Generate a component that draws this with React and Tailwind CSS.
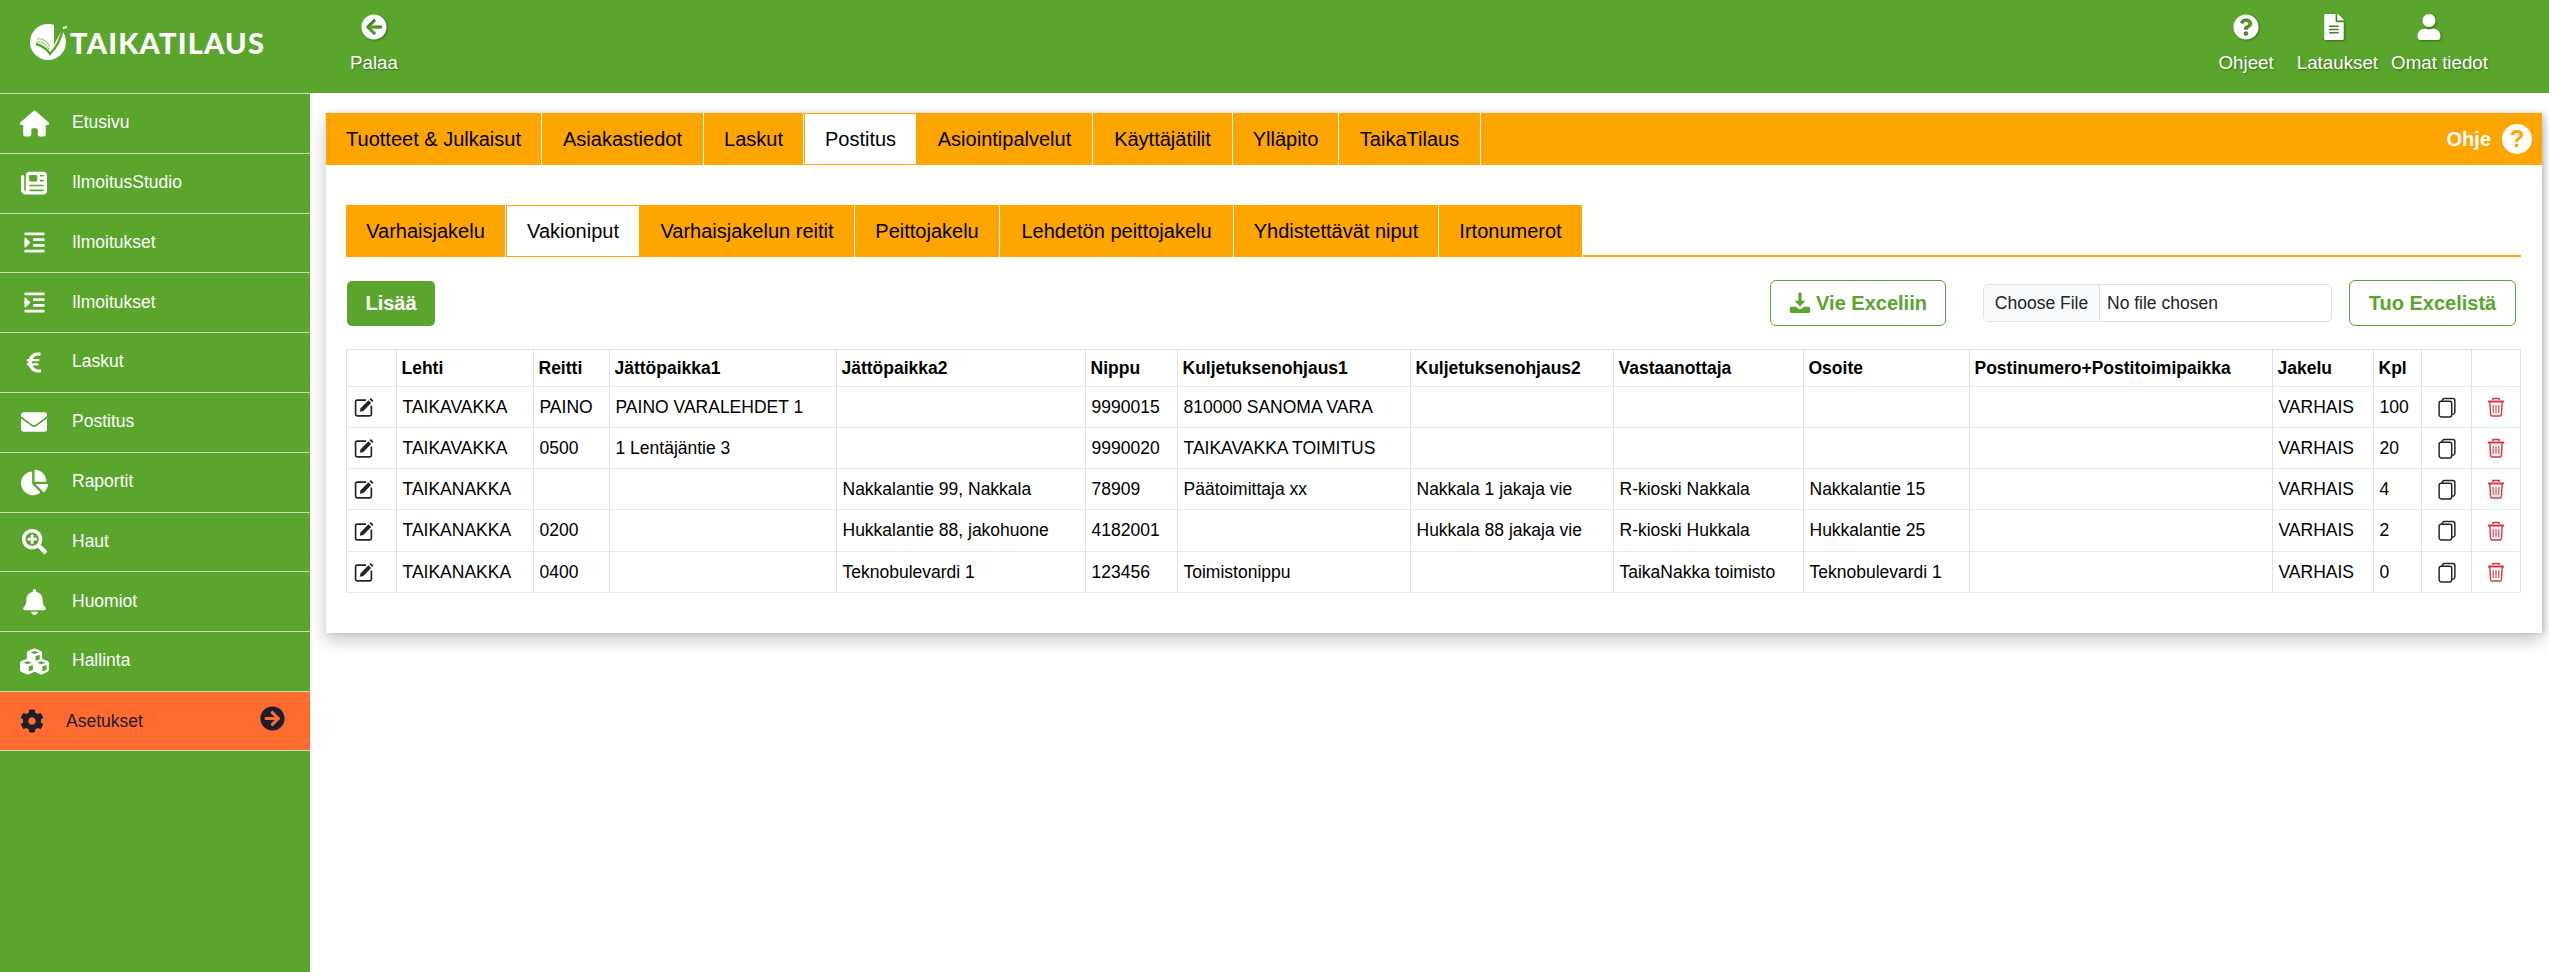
import {
  FaArrowCircleLeft,
  FaArrowCircleRight,
  FaBell,
  FaChartPie,
  FaCog,
  FaEnvelope,
  FaEuroSign,
  FaFileAlt,
  FaIndent,
  FaQuestionCircle,
  FaSearchPlus,
  FaUser,
} from "react-icons/fa";
import { FaCubes, FaHouse, FaNewspaper } from "react-icons/fa6";

const menu = [
  { label: "Etusivu", Icon: FaHouse, size: "w-[29px] h-[29px]" },
  { label: "IlmoitusStudio", Icon: FaNewspaper, size: "w-[26px] h-[26px]" },
  { label: "Ilmoitukset", Icon: FaIndent, size: "w-[23px] h-[23px]" },
  { label: "Ilmoitukset", Icon: FaIndent, size: "w-[23px] h-[23px]" },
  { label: "Laskut", Icon: FaEuroSign, size: "w-[18px] h-[23px]" },
  { label: "Postitus", Icon: FaEnvelope, size: "w-[26px] h-[26px]" },
  { label: "Raportit", Icon: FaChartPie, size: "w-[27px] h-[27px]" },
  { label: "Haut", Icon: FaSearchPlus, size: "w-[25px] h-[25px]" },
  { label: "Huomiot", Icon: FaBell, size: "w-[23px] h-[26px]" },
  { label: "Hallinta", Icon: FaCubes, size: "w-[29px] h-[29px]" },
];

const topTabs = [
  { label: "Tuotteet & Julkaisut", width: "w-[216px]" },
  { label: "Asiakastiedot", width: "w-[162px]" },
  { label: "Laskut", width: "w-[100px]" },
  { label: "Postitus", width: "w-[113px]", active: true },
  { label: "Asiointipalvelut", width: "w-[176px]" },
  { label: "Käyttäjätilit", width: "w-[140px]" },
  { label: "Ylläpito", width: "w-[106px]" },
  { label: "TaikaTilaus", width: "w-[142px]" },
];

const subTabs = [
  { label: "Varhaisjakelu", width: "w-[160px]" },
  { label: "Vakioniput", width: "w-[134px]", active: true },
  { label: "Varhaisjakelun reitit", width: "w-[215px]" },
  { label: "Peittojakelu", width: "w-[145px]" },
  { label: "Lehdetön peittojakelu", width: "w-[234px]" },
  { label: "Yhdistettävät niput", width: "w-[205px]" },
  { label: "Irtonumerot", width: "w-[144px]" },
];

const columns = [
  { title: "", width: "w-[50px]" },
  { title: "Lehti", width: "w-[137px]" },
  { title: "Reitti", width: "w-[76px]" },
  { title: "Jättöpaikka1", width: "w-[227px]" },
  { title: "Jättöpaikka2", width: "w-[249px]" },
  { title: "Nippu", width: "w-[92px]" },
  { title: "Kuljetuksenohjaus1", width: "w-[233px]" },
  { title: "Kuljetuksenohjaus2", width: "w-[203px]" },
  { title: "Vastaanottaja", width: "w-[190px]" },
  { title: "Osoite", width: "w-[166px]" },
  { title: "Postinumero+Postitoimipaikka", width: "w-[303px]" },
  { title: "Jakelu", width: "w-[101px]" },
  { title: "Kpl", width: "w-[48px]" },
  { title: "", width: "w-[50px]" },
  { title: "", width: "w-[49px]" },
];

const rows = [
  { h: "h-[41px]", cells: ["TAIKAVAKKA", "PAINO", "PAINO VARALEHDET 1", "", "9990015", "810000 SANOMA VARA", "", "", "", "", "VARHAIS", "100"] },
  { h: "h-[41px]", cells: ["TAIKAVAKKA", "0500", "1 Lentäjäntie 3", "", "9990020", "TAIKAVAKKA TOIMITUS", "", "", "", "", "VARHAIS", "20"] },
  { h: "h-[41px]", cells: ["TAIKANAKKA", "", "", "Nakkalantie 99, Nakkala", "78909", "Päätoimittaja xx", "Nakkala 1 jakaja vie", "R-kioski Nakkala", "Nakkalantie 15", "", "VARHAIS", "4"] },
  { h: "h-[42px]", cells: ["TAIKANAKKA", "0200", "", "Hukkalantie 88, jakohuone", "4182001", "", "Hukkala 88 jakaja vie", "R-kioski Hukkala", "Hukkalantie 25", "", "VARHAIS", "2"] },
  { h: "h-[41px]", cells: ["TAIKANAKKA", "0400", "", "Teknobulevardi 1", "123456", "Toimistonippu", "", "TaikaNakka toimisto", "Teknobulevardi 1", "", "VARHAIS", "0"] },
];

function LogoMark() {
  return (
    <svg viewBox="0 0 38 38" className="w-[38px] h-[38px] shrink-0">
      <circle cx="18" cy="19" r="18" fill="#fff" />
      <path d="M24 1 L38 0 L38 9 L31 9 L24 22 Z" fill="#5aa52c" />
      <path d="M33 5 C31 16 26 25 20 31 C17 26 13 23 6 21" fill="none" stroke="#5aa52c" strokeWidth="2.4" />
      <path d="M33 5 L37 4" fill="none" stroke="#fff" strokeWidth="2" />
      <path d="M7 16 C12 15 17 18 20 24 M6 19 C12 18 16 21 19 26" fill="none" stroke="#8fc46d" strokeWidth="1.1" />
    </svg>
  );
}

function EditIcon() {
  return (
    <svg viewBox="0 0 18 19" className="w-[20px] h-[20px] ml-[2px] text-[#212529]">
      <path d="M11 3 H2.5 A1.5 1.5 0 0 0 1 4.5 V16.5 A1.5 1.5 0 0 0 2.5 18 H14.5 A1.5 1.5 0 0 0 16 16.5 V8" fill="none" stroke="currentColor" strokeWidth="1.6" />
      <path d="M5 14 L5.8 10.6 L13.2 3.2 L15.8 5.8 L8.4 13.2 Z" fill="currentColor" />
      <path d="M14.2 2.2 L15.4 1 L18 3.6 L16.8 4.8 Z" fill="currentColor" />
    </svg>
  );
}

function CopyIcon() {
  return (
    <svg viewBox="0 0 17 20" fill="none" stroke="currentColor" strokeWidth="1.4" className="w-[18px] h-[21px] mx-auto text-[#212529]">
      <rect x="1" y="4" width="12" height="15" rx="2" />
      <path d="M3.5 4 L4.5 2.2 A1.5 1.5 0 0 1 5.8 1.4 H14 A2 2 0 0 1 16 3.4 V14 A2 2 0 0 1 13 16" />
    </svg>
  );
}

function TrashIcon() {
  return (
    <svg viewBox="0 0 18 20" fill="none" stroke="currentColor" strokeWidth="1.4" className="w-[18px] h-[20px] mx-auto text-[#dc3545]">
      <path d="M1 4.5 H17" strokeWidth="2" />
      <path d="M6 3 V1.5 H12 V3" strokeWidth="1.6" />
      <path d="M2.8 5 L3.6 17.5 A1.5 1.5 0 0 0 5 19 H13 A1.5 1.5 0 0 0 14.4 17.5 L15.2 5" />
      <path d="M6.2 8 V16 M9 8 V16 M11.8 8 V16" strokeWidth="1.1" />
    </svg>
  );
}

function DownloadIcon() {
  return (
    <svg viewBox="0 0 20 20" fill="currentColor" className="w-[22px] h-[22px] mr-[5px]">
      <path d="M8.6 0.5 H11.4 V8 H15 L10 13.2 L5 8 H8.6 Z" />
      <path d="M1.5 13.5 H6 L10 16 L14 13.5 H17.5 A1.8 1.8 0 0 1 19.3 15.3 V17.2 A1.8 1.8 0 0 1 17.5 19 H2.5 A1.8 1.8 0 0 1 0.7 17.2 V15.3 A1.8 1.8 0 0 1 1.5 13.5 Z" />
    </svg>
  );
}

function HeaderLink({ Icon, label, iconClass = "w-[26px] h-[26px]", iconShift = "", className = "" }) {
  return (
    <div className={`flex flex-col items-center ${className}`}>
      <div className={`h-[26px] flex items-center justify-center drop-shadow-[1px_1px_1px_rgba(0,0,0,0.35)] ${iconShift}`}>
        <Icon className={iconClass} />
      </div>
      <span className="mt-[11px] text-[18.75px] leading-[24px] whitespace-nowrap [text-shadow:1px_1px_2px_rgba(0,0,0,0.35)]">
        {label}
      </span>
    </div>
  );
}

export default function App() {
  return (
    <div className="h-[972px] w-[2549px] overflow-hidden bg-white font-['Liberation_Sans',Arial,sans-serif] text-[#212529] flex flex-col">
      <header className="h-[93px] shrink-0 bg-[#5aa52c] text-white flex items-start">
        <div className="w-[310px] shrink-0 pl-[30px] pt-[22px] flex items-center">
          <LogoMark />
          <span className="ml-[2px] mt-[2px] font-['Lato',sans-serif] font-black text-[29px] leading-[38px] tracking-[1.2px]">
            TAIKATILAUS
          </span>
        </div>
        <HeaderLink Icon={FaArrowCircleLeft} label="Palaa" className="ml-[40px] pt-[14px]" />
        <div className="ml-auto flex items-start pt-[14px] pr-[61px]">
          <HeaderLink Icon={FaQuestionCircle} label="Ohjeet" />
          <HeaderLink Icon={FaFileAlt} label="Lataukset" iconClass="w-[20px] h-[26px]" iconShift="mr-[6px]" className="ml-[23px]" />
          <HeaderLink Icon={FaUser} label="Omat tiedot" iconClass="w-[24px] h-[26px]" iconShift="mr-[22px]" className="ml-[13px]" />
        </div>
      </header>

      <div className="flex-1 flex min-h-0">
        <aside className="w-[310px] shrink-0 bg-[#5aa52c] text-white flex flex-col">
          {menu.map(({ label, Icon, size }, i) => (
            <div key={i} className="h-[59.8px] border-t border-[#c9e0b8] flex items-center">
              <div className="w-[72px] shrink-0 flex justify-center pr-[4px]">
                <Icon className={size} />
              </div>
              <span className="text-[17.5px] -mt-[2px]">{label}</span>
            </div>
          ))}
          <div className="h-[60px] border-y border-[#c9e0b8] bg-[#ff6c2f] text-[#1d1d2b] flex items-center">
            <FaCog className="w-[24px] h-[24px] ml-[20px]" />
            <span className="ml-[22px] text-[17.5px]">Asetukset</span>
            <FaArrowCircleRight className="w-[25px] h-[25px] ml-auto mr-[25px] -mt-[4px]" />
          </div>
        </aside>

        <main className="flex-1 pt-[20px] pl-[15px] pr-[7px]">
          <div className="h-[520px] border-l border-[#dee2e6] shadow-[0_8px_16px_rgba(0,0,0,0.2),3px_0_5px_rgba(0,0,0,0.15)] bg-white">
            <div className="h-[52px] bg-[#ffa500] flex items-stretch">
              {topTabs.map((tab) => (
                <div
                  key={tab.label}
                  className={
                    tab.active
                      ? `${tab.width} flex items-center justify-center text-[20px] border border-[#ffa500] bg-white text-black`
                      : `${tab.width} flex items-center justify-center text-[20px] border-r border-white text-black`
                  }
                >
                  {tab.label}
                </div>
              ))}
              <div className="ml-auto flex items-center pr-[10px] text-white font-bold text-[20px]">
                Ohje
                <span className="ml-[11px] w-[30px] h-[30px] rounded-full bg-white text-[#ffa500] flex items-center justify-center text-[24px] leading-none">
                  ?
                </span>
              </div>
            </div>

            <div className="pl-[20px] pr-[21px] pt-[40px]">
              <div className="h-[52px] flex items-stretch border-b-2 border-[#ffa500]">
                {subTabs.map((tab) => (
                  <div
                    key={tab.label}
                    className={
                      tab.active
                        ? `${tab.width} h-[52px] flex items-center justify-center text-[20px] border border-[#ffa500] bg-white text-black`
                        : `${tab.width} h-[52px] flex items-center justify-center text-[20px] bg-[#ffa500] border-r border-white text-black`
                    }
                  >
                    {tab.label}
                  </div>
                ))}
              </div>

              <div className="mt-[23px] h-[46px] flex items-center">
                <button className="ml-[1px] w-[88px] h-[45px] rounded-[5px] bg-[#5aa52c] text-white font-bold text-[20px]">
                  Lisää
                </button>
                <button className="ml-auto w-[176px] h-[46px] rounded-[6px] border border-[#5aa52c] text-[#5aa52c] font-bold text-[20px] flex items-center justify-center">
                  <DownloadIcon />
                  Vie Exceliin
                </button>
                <input
                  type="file"
                  className="ml-[37px] w-[349px] h-[38px] rounded-[5px] border border-[#dee2e6] text-[17.5px] text-[#212529] file:h-full file:w-[116px] file:mr-[7px] file:bg-[#f8f9fa] file:border-0 file:border-r file:border-solid file:border-[#dee2e6] file:text-[17.5px] file:text-[#212529]"
                />
                <button className="ml-[17px] mr-[5px] w-[167px] h-[46px] rounded-[6px] border border-[#5aa52c] text-[#5aa52c] font-bold text-[20px]">
                  Tuo Excelistä
                </button>
              </div>

              <table className="mt-[23px] w-[2174px] table-fixed border-collapse border border-[#dee2e6] text-[17.5px] text-[#212529]">
                <colgroup>
                  {columns.map((col, i) => (
                    <col key={i} className={col.width} />
                  ))}
                </colgroup>
                <thead>
                  <tr className="h-[37px] border-b border-[#deebf5]">
                    {columns.map((col, i) => (
                      <th key={i} className="border-x border-[#dee2e6] px-[4.5px] text-left font-bold text-black whitespace-nowrap overflow-hidden">
                        {col.title}
                      </th>
                    ))}
                  </tr>
                </thead>
                <tbody>
                  {rows.map((row, r) => (
                    <tr key={r} className={`${row.h} border-b border-[#e2ebf2]`}>
                      <td className="border-x border-[#dee2e6] px-[5px] align-middle">
                        <EditIcon />
                      </td>
                      {row.cells.map((cell, c) => (
                        <td key={c} className="border-x border-[#dee2e6] pl-[5.5px] pr-[2px] align-middle whitespace-nowrap text-black">
                          {cell}
                        </td>
                      ))}
                      <td className="border-x border-[#dee2e6] align-middle">
                        <CopyIcon />
                      </td>
                      <td className="border-x border-[#dee2e6] align-middle">
                        <TrashIcon />
                      </td>
                    </tr>
                  ))}
                </tbody>
              </table>
            </div>
          </div>
        </main>
      </div>
    </div>
  );
}
